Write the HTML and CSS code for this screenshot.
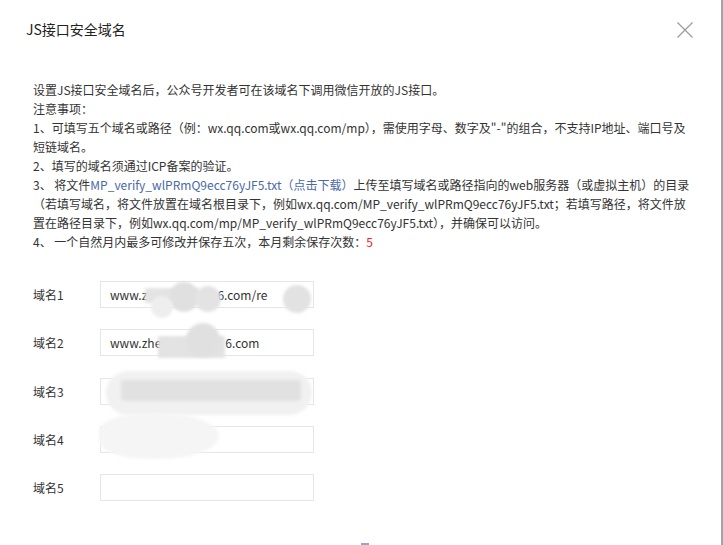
FILE: index.html
```html
<!DOCTYPE html>
<html lang="zh-CN">
<head>
<meta charset="utf-8">
<title>JS接口安全域名</title>
<link rel="stylesheet" href="styles.css">
</head>
<body>
<div class="dialog">
  <div class="header">
    <div class="title">JS接口安全域名</div>
    <svg class="close" width="16" height="16" viewBox="0 0 16 16" aria-label="关闭">
      <path d="M0.5 0.5 L15.5 15.5 M15.5 0.5 L0.5 15.5" stroke="#9a9a9a" stroke-width="1.2" fill="none"/>
    </svg>
  </div>

  <div class="notes">
    <p>设置JS接口安全域名后，公众号开发者可在该域名下调用微信开放的JS接口。</p>
    <p>注意事项：</p>
    <p>1、可填写五个域名或路径（例：wx.qq.com或wx.qq.com/mp），需使用字母、数字及"-"的组合，不支持IP地址、端口号及<br>短链域名。</p>
    <p>2、填写的域名须通过ICP备案的验证。</p>
    <p>3、 将文件<a class="link" href="#">MP_verify_wlPRmQ9ecc76yJF5.txt（点击下载）</a>上传至填写域名或路径指向的web服务器（或虚拟主机）的目录<br>（若填写域名，将文件放置在域名根目录下，例如wx.qq.com/MP_verify_wlPRmQ9ecc76yJF5.txt；若填写路径，将文件放<br>置在路径目录下，例如wx.qq.com/mp/MP_verify_wlPRmQ9ecc76yJF5.txt），并确保可以访问。</p>
    <p>4、 一个自然月内最多可修改并保存五次，本月剩余保存次数：<span class="red">5</span></p>
  </div>

  <div class="form">
    <div class="row">
      <label class="label">域名1</label>
      <div class="input">
        <span>www.z</span><span class="gap gap-1"></span><span>6.com/re</span>
        <i class="blob b1a"></i><i class="blob b1b"></i><i class="blob b1c"></i><i class="blob b1d"></i><i class="blob b1e"></i>
      </div>
    </div>
    <div class="row">
      <label class="label">域名2</label>
      <div class="input">
        <span>www.zhe</span><span class="gap gap-2"></span><span>6.com</span>
        <i class="blob b2a"></i><i class="blob b2b"></i>
      </div>
    </div>
    <div class="row">
      <label class="label">域名3</label>
      <div class="input">
        <i class="blob b3a"></i><i class="blob b3b"></i>
      </div>
    </div>
    <div class="row">
      <label class="label">域名4</label>
      <div class="input">
        <i class="blob b4a"></i>
      </div>
    </div>
    <div class="row">
      <label class="label">域名5</label>
      <div class="input"></div>
    </div>
  </div>

  <div class="footer">
    <span class="peek"></span>
  </div>
</div>
</body>
</html>
```

FILE: styles.css
```css
* { box-sizing: border-box; }

html, body {
  margin: 0;
  padding: 0;
  background: #ffffff;
}

body {
  width: 723px;
  height: 545px;
  overflow: hidden;
  font-family: "Noto Sans CJK SC", "Noto Sans", sans-serif;
  color: #333333;
}

.dialog {
  width: 723px;
  height: 545px;
  border-right: 2px solid #a4a4a4;
  display: flex;
  flex-direction: column;
}

.header {
  display: flex;
  justify-content: space-between;
  align-items: center;
  padding: 19px 28px 0 26px;
  height: 39px;
}

.title {
  font-size: 14px;
  line-height: 20px;
  color: #222;
}

.close {
  display: block;
  margin-top: 1px;
}

.notes {
  margin-top: 41px;
  padding-left: 33px;
  font-size: 12px;
  line-height: 19px;
  white-space: nowrap;
}

.notes p {
  margin: 0;
}

.link {
  color: #4a69a6;
  text-decoration: none;
}

.red {
  color: #ee2222;
}

.form {
  margin-top: 30px;
  padding-left: 33px;
  display: flex;
  flex-direction: column;
  gap: 21.25px;
}

.row {
  display: flex;
  align-items: center;
  height: 27px;
}

.label {
  width: 67px;
  font-size: 12px;
  color: #333333;
}

.input {
  position: relative;
  width: 214px;
  height: 27px;
  border: 1px solid #e6e6e6;
  padding-left: 9px;
  font-size: 12px;
  line-height: 25px;
  color: #333333;
  white-space: nowrap;
}

.gap {
  display: inline-block;
  height: 1px;
}
.gap-1 { width: 70px; }
.gap-2 { width: 64px; }

.blob {
  position: absolute;
  display: block;
  background: #e2e2e2;
  filter: blur(1.5px);
}

/* row 1 smudges */
.b1a { left: 44px; top: 6px; width: 54px; height: 15px; background: #e4e4e4; }
.b1b { left: 68px; top: 0px; width: 30px; height: 30px; border-radius: 50%; background: #e0e0e0; }
.b1c { left: 94px; top: 4px; width: 26px; height: 26px; border-radius: 50%; background: #e3e3e3; }
.b1d { left: 182px; top: 3px; width: 28px; height: 28px; border-radius: 50%; background: #e2e2e2; }
.b1e { left: 50px; top: 14px; width: 22px; height: 22px; border-radius: 50%; background: #eeeeee; }

/* row 2 smudges */
.b2a { left: 57px; top: 6px; width: 67px; height: 22px; background: #e3e3e3; }
.b2b { left: 85px; top: -7px; width: 34px; height: 34px; border-radius: 50%; background: #e0e0e0; }

/* row 3 smudges */
.b3a { left: 5px; top: -8px; width: 206px; height: 44px; border-radius: 22px; background: #f1f1f1; }
.b3b { left: 20px; top: 1px; width: 180px; height: 21px; border-radius: 4px; background: #e1e1e1; }

/* row 4 smudge */
.b4a { left: -2px; top: -14px; width: 120px; height: 46px; border-radius: 40% 50% 50% 40%; background: #f5f5f5; }

.footer {
  flex: 1;
  display: flex;
  justify-content: center;
  align-items: flex-end;
  padding-left: 8px;
}

.peek {
  display: block;
  width: 8px;
  height: 2px;
  background: #93a6c2;
}
```
